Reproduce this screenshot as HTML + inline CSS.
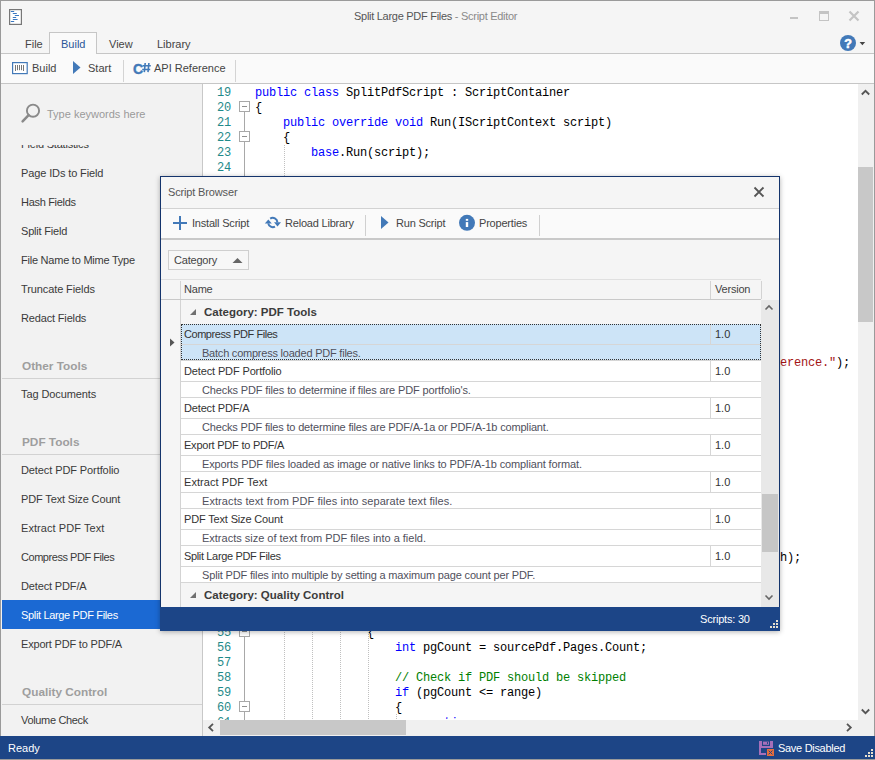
<!DOCTYPE html>
<html><head><meta charset="utf-8">
<style>
*{box-sizing:border-box;margin:0;padding:0}
html,body{width:875px;height:760px;overflow:hidden;background:#f5f5f5;font-family:"Liberation Sans",sans-serif;font-size:11px;color:#444}
.a{position:absolute}
.t{position:absolute;white-space:nowrap;line-height:1}
.cl{position:absolute;font-family:"Liberation Mono",monospace;font-size:12px;letter-spacing:-0.2px;line-height:15px;white-space:pre;color:#000}
.ln{position:absolute;left:201px;width:30px;text-align:right;font-family:"Liberation Mono",monospace;font-size:12px;letter-spacing:-0.2px;line-height:15px;color:#1f8a8a}
.k{color:#0000ff}.s{color:#a31515}.c{color:#008000}
.fold{position:absolute;left:239px;width:11px;height:11px;border:1px solid #a8a8a8;background:#fff}
.fold:after{content:"";position:absolute;left:2px;top:4px;width:5px;height:1px;background:#909090}
.guide{position:absolute;width:1px;background-image:linear-gradient(#c0c0c0 50%,transparent 50%);background-size:1px 2px}
</style></head><body>
<div class="a" style="left:0;top:0;width:875px;height:760px;border:1px solid #9a9a9a"></div>
<div class="a" style="left:1px;top:1px;width:873px;height:52px;background:#f5f5f5"></div>
<div class="t" style="left:354px;top:11px;font-size:11px;letter-spacing:-0.28px;color:#555">Split Large PDF Files <span style="color:#8a8a8a">- Script Editor</span></div>
<svg class="a" style="left:9px;top:9px" width="13" height="16" viewBox="0 0 13 16">
<rect x="0.6" y="0.6" width="11.8" height="14.8" fill="#fff" stroke="#777" stroke-width="1.2"/>
<path d="M2.2 2.5h2.6M4.2 4.5h3.2M6.2 6.5h3.4M4.2 8.5h2.6M4.2 10.5h4M2.2 12.5h2.6" stroke="#3a78c2" stroke-width="1" stroke-linecap="round"/>
</svg>
<div class="a" style="left:790px;top:17px;width:8px;height:2px;background:#c4c4c4"></div>
<div class="a" style="left:819px;top:11px;width:10px;height:10px;border:1px solid #c4c4c4;border-top-width:3px"></div>
<svg class="a" style="left:848px;top:10px" width="12" height="12" viewBox="0 0 12 12"><path d="M1.5 1.5L10.5 10.5M10.5 1.5L1.5 10.5" stroke="#c4c4c4" stroke-width="2.2"/></svg>
<svg class="a" style="left:839px;top:34px" width="30" height="18" viewBox="0 0 30 18">
<circle cx="9" cy="9" r="8" fill="#4279b8"/>
<text x="9" y="13.5" text-anchor="middle" font-family="Liberation Sans" font-weight="bold" font-size="12.5" fill="#fff" stroke="#fff" stroke-width="0.6">?</text>
<path d="M20.6 8h5.6l-2.8 3.2z" fill="#444"/>
</svg>
<div class="a" style="left:1px;top:53px;width:873px;height:1px;background:#c6c6c6"></div>
<div class="a" style="left:49px;top:32px;width:48px;height:22px;background:#fafafa;border:1px solid #c6c6c6;border-bottom:none"></div>
<div class="t" style="left:25px;top:39px;font-size:11px;color:#444">File</div>
<div class="t" style="left:61px;top:39px;font-size:11px;color:#2a5699">Build</div>
<div class="t" style="left:109px;top:39px;font-size:11px;color:#444">View</div>
<div class="t" style="left:157px;top:39px;font-size:11px;color:#444">Library</div>
<div class="a" style="left:1px;top:54px;width:873px;height:29px;background:#fafafa"></div>
<div class="a" style="left:1px;top:83px;width:873px;height:1px;background:#c6c6c6"></div>
<div class="t" style="left:32px;top:63px;font-size:11px;color:#444">Build</div>
<div class="t" style="left:88px;top:63px;font-size:11px;color:#444">Start</div>
<div class="t" style="left:154px;top:63px;font-size:11px;color:#444">API Reference</div>
<svg class="a" style="left:12px;top:62px" width="16" height="13" viewBox="0 0 16 13">
<rect x="0.6" y="0.6" width="14.6" height="11" fill="#fff" stroke="#4279b8" stroke-width="1.2"/>
<path d="M3.5 3v6M5.5 3v5.2M7.5 3v5.2M9.5 3v5.2M11.5 3v6" stroke="#777" stroke-width="1"/>
</svg>
<svg class="a" style="left:72px;top:60px" width="10" height="15" viewBox="0 0 10 15"><path d="M1 1L8.5 7.5L1 14z" fill="#4279b8"/></svg>
<svg class="a" style="left:132px;top:60px" width="20" height="16" viewBox="0 0 20 16">
<text x="1" y="14.2" font-family="Liberation Sans" font-weight="bold" font-size="14" fill="#4279b8" stroke="#4279b8" stroke-width="0.4">C</text>
<path d="M13.2 3L12.3 12.2M16.9 3L16 12.2M10.6 5.8H18.8M10.2 9.5H18.2" stroke="#4279b8" stroke-width="1.6"/>
</svg>
<div class="a" style="left:123px;top:60px;width:1px;height:22px;background:#d4d4d4"></div>
<div class="a" style="left:235px;top:60px;width:1px;height:22px;background:#d4d4d4"></div>
<div class="a" style="left:1px;top:84px;width:201px;height:652px;background:#f2f2f2"></div>
<div class="a" style="left:202px;top:84px;width:1px;height:652px;background:#c8c8c8"></div>
<div class="t" style="left:47px;top:109px;font-size:11px;color:#9a9a9a">Type keywords here</div>
<svg class="a" style="left:20px;top:102px" width="22" height="22" viewBox="0 0 22 22">
<circle cx="13" cy="8.7" r="6.1" fill="none" stroke="#8a8a8a" stroke-width="1.9"/>
<path d="M8.6 13.1L2.6 19.3" stroke="#8a8a8a" stroke-width="2.5" stroke-linecap="round"/>
</svg>
<div class="a" style="left:1px;top:145px;width:201px;height:591px;overflow:hidden">
<div class="a" style="left:1px;top:455px;width:201px;height:29px;background:#1b69d3"></div>
<div class="t" style="left:20px;top:-6px;font-size:11px;letter-spacing:-0.200px;color:#3a3a3a">Field Statistics</div>
<div class="t" style="left:20px;top:23px;font-size:11px;letter-spacing:-0.119px;color:#3a3a3a">Page IDs to Field</div>
<div class="t" style="left:20px;top:52px;font-size:11px;letter-spacing:-0.310px;color:#3a3a3a">Hash Fields</div>
<div class="t" style="left:20px;top:81px;font-size:11px;letter-spacing:-0.200px;color:#3a3a3a">Split Field</div>
<div class="t" style="left:20px;top:110px;font-size:11px;letter-spacing:-0.233px;color:#3a3a3a">File Name to Mime Type</div>
<div class="t" style="left:20px;top:139px;font-size:11px;letter-spacing:-0.107px;color:#3a3a3a">Truncate Fields</div>
<div class="t" style="left:20px;top:168px;font-size:11px;letter-spacing:-0.158px;color:#3a3a3a">Redact Fields</div>
<div class="t" style="left:21px;top:216px;font-size:11.8px;font-weight:bold;color:#9e9e9e">Other Tools</div>
<div class="a" style="left:1px;top:233px;width:201px;height:1px;background:#d2d2d2"></div>
<div class="t" style="left:20px;top:244px;font-size:11px;letter-spacing:-0.092px;color:#3a3a3a">Tag Documents</div>
<div class="t" style="left:21px;top:292px;font-size:11.8px;font-weight:bold;color:#9e9e9e">PDF Tools</div>
<div class="a" style="left:1px;top:309px;width:201px;height:1px;background:#d2d2d2"></div>
<div class="t" style="left:20px;top:320px;font-size:11px;letter-spacing:-0.095px;color:#3a3a3a">Detect PDF Portfolio</div>
<div class="t" style="left:20px;top:349px;font-size:11px;letter-spacing:-0.139px;color:#3a3a3a">PDF Text Size Count</div>
<div class="t" style="left:20px;top:378px;font-size:11px;letter-spacing:0.073px;color:#3a3a3a">Extract PDF Text</div>
<div class="t" style="left:20px;top:407px;font-size:11px;letter-spacing:-0.453px;color:#3a3a3a">Compress PDF Files</div>
<div class="t" style="left:20px;top:436px;font-size:11px;letter-spacing:-0.145px;color:#3a3a3a">Detect PDF/A</div>
<div class="t" style="left:20px;top:465px;font-size:11px;letter-spacing:-0.340px;color:#ffffff">Split Large PDF Files</div>
<div class="t" style="left:20px;top:494px;font-size:11px;letter-spacing:-0.189px;color:#3a3a3a">Export PDF to PDF/A</div>
<div class="t" style="left:21px;top:542px;font-size:11.8px;font-weight:bold;color:#9e9e9e">Quality Control</div>
<div class="a" style="left:1px;top:559px;width:201px;height:1px;background:#d2d2d2"></div>
<div class="t" style="left:20px;top:570px;font-size:11px;letter-spacing:-0.336px;color:#3a3a3a">Volume Check</div>
</div>
<div class="a" style="left:203px;top:84px;width:655px;height:636px;background:#fff"></div>
<div class="ln" style="top:86px">19</div>
<div class="ln" style="top:101px">20</div>
<div class="ln" style="top:116px">21</div>
<div class="ln" style="top:131px">22</div>
<div class="ln" style="top:146px">23</div>
<div class="ln" style="top:161px">24</div>
<div class="ln" style="top:626px">55</div>
<div class="ln" style="top:641px">56</div>
<div class="ln" style="top:656px">57</div>
<div class="ln" style="top:671px">58</div>
<div class="ln" style="top:686px">59</div>
<div class="ln" style="top:701px">60</div>
<div class="ln" style="top:716px">61</div>
<div class="cl" style="left:255px;top:86px"><span class="k">public</span> <span class="k">class</span> SplitPdfScript : ScriptContainer</div>
<div class="cl" style="left:255px;top:101px">{</div>
<div class="cl" style="left:283px;top:116px"><span class="k">public</span> <span class="k">override</span> <span class="k">void</span> Run(IScriptContext script)</div>
<div class="cl" style="left:283px;top:131px">{</div>
<div class="cl" style="left:311px;top:146px"><span class="k">base</span>.Run(script);</div>
<div class="cl" style="left:780px;top:356px"><span class="s">erence."</span>);</div>
<div class="cl" style="left:780px;top:551px">h);</div>
<div class="cl" style="left:367px;top:626px">{</div>
<div class="cl" style="left:395px;top:641px"><span class="k">int</span> pgCount = sourcePdf.Pages.Count;</div>
<div class="cl" style="left:395px;top:671px"><span class="c">// Check if PDF should be skipped</span></div>
<div class="cl" style="left:395px;top:686px"><span class="k">if</span> (pgCount &lt;= range)</div>
<div class="cl" style="left:395px;top:701px">{</div>
<div class="a" style="left:0;top:716px;width:858px;height:3px;overflow:hidden"><div class="cl" style="left:423px;top:0"><span class="k">continue</span>;</div></div>
<div class="a" style="left:244px;top:112px;width:1px;height:608px;background:#a8a8a8"></div>
<div class="fold" style="top:101px"></div>
<div class="fold" style="top:131px"></div>
<div class="fold" style="top:626px"></div>
<div class="fold" style="top:701px"></div>
<div class="guide" style="left:284px;top:145px;height:32px"></div>
<div class="guide" style="left:396px;top:714px;height:6px"></div>
<div class="guide" style="left:284px;top:630px;height:90px"></div>
<div class="guide" style="left:312px;top:630px;height:90px"></div>
<div class="guide" style="left:340px;top:630px;height:90px"></div>
<div class="guide" style="left:368px;top:630px;height:90px"></div>
<div class="a" style="left:203px;top:720px;width:671px;height:16px;background:#f0f0f0"></div>
<div class="a" style="left:220px;top:720px;width:186px;height:15px;background:#c8c8c8"></div>
<div class="a" style="left:858px;top:84px;width:16px;height:636px;background:#f0f0f0"></div>
<div class="a" style="left:858px;top:167px;width:15px;height:155px;background:#c8c8c8"></div>
<svg class="a" style="left:860px;top:88px" width="11" height="9" viewBox="0 0 11 9"><path d="M1.8 6.5L5.5 2.8L9.2 6.5" fill="none" stroke="#555" stroke-width="1.8"/></svg>
<svg class="a" style="left:860px;top:707px" width="11" height="9" viewBox="0 0 11 9"><path d="M1.8 2.5L5.5 6.2L9.2 2.5" fill="none" stroke="#555" stroke-width="1.8"/></svg>
<svg class="a" style="left:205px;top:722px" width="11" height="11" viewBox="0 0 11 11"><path d="M8 1.8L4.2 5.5L8 9.2" fill="none" stroke="#555" stroke-width="1.8"/></svg>
<svg class="a" style="left:844px;top:722px" width="11" height="11" viewBox="0 0 11 11"><path d="M3 1.8L6.8 5.5L3 9.2" fill="none" stroke="#555" stroke-width="1.8"/></svg>
<div class="a" style="left:0;top:736px;width:875px;height:23px;background:#1d4586"></div>
<div class="t" style="left:8px;top:743px;font-size:11px;color:#fff">Ready</div>
<div class="t" style="left:778px;top:743px;font-size:11px;letter-spacing:-0.3px;color:#fff">Save Disabled</div>
<svg class="a" style="left:756px;top:739px" width="20" height="19" viewBox="0 0 20 19">
<path d="M3 2H17V9H3z M6 2V7H14V2z" fill="#a56fb9" fill-rule="evenodd"/>
<rect x="7" y="2.6" width="6" height="3.2" fill="#a56fb9"/><rect x="11" y="3" width="0.9" height="2" fill="#1d4586"/>
<rect x="3" y="2" width="2" height="14" fill="#a56fb9"/>
<rect x="3" y="14" width="7" height="2" fill="#a56fb9"/>
<rect x="11" y="10" width="7" height="7" fill="#e56d3c"/>
<path d="M12.6 11.6L16.4 15.4M16.4 11.6L12.6 15.4" stroke="#1d4586" stroke-width="1"/>
</svg>
<div class="a" style="left:871px;top:749px;width:2px;height:2px;background:#e6dfcf"></div>
<div class="a" style="left:868px;top:752px;width:2px;height:2px;background:#e6dfcf"></div>
<div class="a" style="left:871px;top:752px;width:2px;height:2px;background:#e6dfcf"></div>
<div class="a" style="left:865px;top:755px;width:2px;height:2px;background:#e6dfcf"></div>
<div class="a" style="left:868px;top:755px;width:2px;height:2px;background:#e6dfcf"></div>
<div class="a" style="left:871px;top:755px;width:2px;height:2px;background:#e6dfcf"></div>
<div class="a" style="left:160px;top:176px;width:620px;height:455px;background:#f5f5f5;border:1px solid #14346c;box-shadow:0 1px 5px rgba(0,0,0,0.3)"></div>
<div class="t" style="left:168px;top:187px;font-size:11px;color:#555;letter-spacing:-0.15px">Script Browser</div>
<svg class="a" style="left:753px;top:186px" width="12" height="12" viewBox="0 0 12 12"><path d="M1.5 1.5L10.5 10.5M10.5 1.5L1.5 10.5" stroke="#555" stroke-width="1.8"/></svg>
<div class="a" style="left:161px;top:208px;width:618px;height:1px;background:#d2d2d2"></div>
<div class="a" style="left:161px;top:209px;width:618px;height:29px;background:#fafafa"></div>
<div class="a" style="left:161px;top:238px;width:618px;height:2px;background:#c9c9c9"></div>
<svg class="a" style="left:173px;top:216px" width="14" height="14" viewBox="0 0 14 14"><path d="M7 0v14M0 7h14" stroke="#4279b8" stroke-width="2"/></svg>
<div class="t" style="left:192px;top:218px;font-size:11px;color:#444;letter-spacing:-0.2px">Install Script</div>
<svg class="a" style="left:262px;top:213px" width="22" height="20" viewBox="0 0 22 20">
<path d="M8.2 5.6A4.7 4.7 0 0 1 15.4 9.4" fill="none" stroke="#4279b8" stroke-width="2"/>
<path d="M12 9.2H19L15.5 13.4z" fill="#4279b8"/>
<path d="M13 13.6A4.7 4.7 0 0 1 6.2 10.4" fill="none" stroke="#4279b8" stroke-width="2"/>
<path d="M2.8 10.6H9.8L6.3 6.6z" fill="#4279b8"/>
</svg>
<div class="t" style="left:285px;top:218px;font-size:11px;color:#444;letter-spacing:-0.2px">Reload Library</div>
<div class="a" style="left:365px;top:215px;width:1px;height:21px;background:#d0d0d0"></div>
<svg class="a" style="left:380px;top:215px" width="10" height="15" viewBox="0 0 10 15"><path d="M1 1L8.5 7.5L1 14z" fill="#4279b8"/></svg>
<div class="t" style="left:396px;top:218px;font-size:11px;color:#444;letter-spacing:-0.2px">Run Script</div>
<svg class="a" style="left:458px;top:214px" width="18" height="18" viewBox="0 0 18 18"><circle cx="9" cy="8.8" r="8" fill="#4279b8"/>
<rect x="7.8" y="8.1" width="2.4" height="4.9" fill="#fff"/><rect x="7.8" y="4.9" width="2.4" height="1.9" fill="#fff"/></svg>
<div class="t" style="left:479px;top:218px;font-size:11px;color:#444;letter-spacing:-0.2px">Properties</div>
<div class="a" style="left:539px;top:215px;width:1px;height:21px;background:#d0d0d0"></div>
<div class="a" style="left:168px;top:250px;width:81px;height:20px;border:1px solid #cfcfcf;background:#f7f7f7"></div>
<div class="t" style="left:174px;top:255px;font-size:11px;color:#444;letter-spacing:-0.2px">Category</div>
<svg class="a" style="left:232px;top:257px" width="11" height="7" viewBox="0 0 11 7"><path d="M0.5 6L5.5 1L10.5 6z" fill="#666"/></svg>
<div class="a" style="left:161px;top:279px;width:600px;height:1px;background:#e0e0e0"></div>
<div class="a" style="left:161px;top:280px;width:600px;height:19px;background:#f5f5f5"></div>
<div class="a" style="left:161px;top:299px;width:600px;height:1px;background:#c9c9c9"></div>
<div class="a" style="left:180px;top:281px;width:1px;height:18px;background:#d3d3d3"></div>
<div class="a" style="left:710px;top:281px;width:1px;height:18px;background:#d3d3d3"></div>
<div class="a" style="left:761px;top:281px;width:1px;height:18px;background:#d3d3d3"></div>
<div class="t" style="left:184px;top:284px;font-size:11px;color:#444;letter-spacing:-0.2px">Name</div>
<div class="t" style="left:715px;top:284px;font-size:11px;color:#444;letter-spacing:-0.2px">Version</div>
<div class="a" style="left:161px;top:300px;width:19px;height:307px;background:#f5f5f5"></div>
<div class="a" style="left:180px;top:300px;width:1px;height:307px;background:#d3d3d3"></div>
<div class="a" style="left:181px;top:300px;width:580px;height:24px;background:#f5f5f5"></div>
<svg class="a" style="left:189px;top:308px" width="8" height="8" viewBox="0 0 8 8"><path d="M7 1V7H1z" fill="#707070"/></svg>
<div class="t" style="left:204px;top:307px;font-size:11.5px;color:#3c3c3c;font-weight:bold">Category: PDF Tools</div>
<div class="a" style="left:181px;top:324px;width:580px;height:36px;background:#cde4f7"></div>
<div class="a" style="left:181px;top:344px;width:580px;height:1px;background:#d6d6d6"></div>
<div class="a" style="left:181px;top:360px;width:580px;height:1px;background:#d6d6d6"></div>
<div class="a" style="left:710px;top:324px;width:1px;height:20px;background:#d6d6d6"></div>
<div class="t" style="left:184px;top:329px;font-size:11px;color:#333;letter-spacing:-0.450px">Compress PDF Files</div>
<div class="t" style="left:715px;top:329px;font-size:11px;color:#333;">1.0</div>
<div class="t" style="left:202px;top:348px;font-size:11px;color:#50505c;letter-spacing:-0.221px">Batch compress loaded PDF files.</div>
<div class="a" style="left:181px;top:361px;width:580px;height:36px;background:#ffffff"></div>
<div class="a" style="left:181px;top:381px;width:580px;height:1px;background:#d6d6d6"></div>
<div class="a" style="left:181px;top:397px;width:580px;height:1px;background:#d6d6d6"></div>
<div class="a" style="left:710px;top:361px;width:1px;height:20px;background:#d6d6d6"></div>
<div class="t" style="left:184px;top:366px;font-size:11px;color:#333;letter-spacing:-0.134px">Detect PDF Portfolio</div>
<div class="t" style="left:715px;top:366px;font-size:11px;color:#333;">1.0</div>
<div class="t" style="left:202px;top:385px;font-size:11px;color:#50505c;letter-spacing:-0.133px">Checks PDF files to determine if files are PDF portfolio's.</div>
<div class="a" style="left:181px;top:398px;width:580px;height:36px;background:#ffffff"></div>
<div class="a" style="left:181px;top:418px;width:580px;height:1px;background:#d6d6d6"></div>
<div class="a" style="left:181px;top:434px;width:580px;height:1px;background:#d6d6d6"></div>
<div class="a" style="left:710px;top:398px;width:1px;height:20px;background:#d6d6d6"></div>
<div class="t" style="left:184px;top:403px;font-size:11px;color:#333;letter-spacing:-0.159px">Detect PDF/A</div>
<div class="t" style="left:715px;top:403px;font-size:11px;color:#333;">1.0</div>
<div class="t" style="left:202px;top:422px;font-size:11px;color:#50505c;letter-spacing:-0.173px">Checks PDF files to determine files are PDF/A-1a or PDF/A-1b compliant.</div>
<div class="a" style="left:181px;top:435px;width:580px;height:36px;background:#ffffff"></div>
<div class="a" style="left:181px;top:455px;width:580px;height:1px;background:#d6d6d6"></div>
<div class="a" style="left:181px;top:471px;width:580px;height:1px;background:#d6d6d6"></div>
<div class="a" style="left:710px;top:435px;width:1px;height:20px;background:#d6d6d6"></div>
<div class="t" style="left:184px;top:440px;font-size:11px;color:#333;letter-spacing:-0.228px">Export PDF to PDF/A</div>
<div class="t" style="left:715px;top:440px;font-size:11px;color:#333;">1.0</div>
<div class="t" style="left:202px;top:459px;font-size:11px;color:#50505c;letter-spacing:-0.129px">Exports PDF files loaded as image or native links to PDF/A-1b compliant format.</div>
<div class="a" style="left:181px;top:472px;width:580px;height:36px;background:#ffffff"></div>
<div class="a" style="left:181px;top:492px;width:580px;height:1px;background:#d6d6d6"></div>
<div class="a" style="left:181px;top:508px;width:580px;height:1px;background:#d6d6d6"></div>
<div class="a" style="left:710px;top:472px;width:1px;height:20px;background:#d6d6d6"></div>
<div class="t" style="left:184px;top:477px;font-size:11px;color:#333;letter-spacing:0.070px">Extract PDF Text</div>
<div class="t" style="left:715px;top:477px;font-size:11px;color:#333;">1.0</div>
<div class="t" style="left:202px;top:496px;font-size:11px;color:#50505c;letter-spacing:0.076px">Extracts text from PDF files into separate text files.</div>
<div class="a" style="left:181px;top:509px;width:580px;height:36px;background:#ffffff"></div>
<div class="a" style="left:181px;top:529px;width:580px;height:1px;background:#d6d6d6"></div>
<div class="a" style="left:181px;top:545px;width:580px;height:1px;background:#d6d6d6"></div>
<div class="a" style="left:710px;top:509px;width:1px;height:20px;background:#d6d6d6"></div>
<div class="t" style="left:184px;top:514px;font-size:11px;color:#333;letter-spacing:-0.161px">PDF Text Size Count</div>
<div class="t" style="left:715px;top:514px;font-size:11px;color:#333;">1.0</div>
<div class="t" style="left:202px;top:533px;font-size:11px;color:#50505c;letter-spacing:-0.007px">Extracts size of text from PDF files into a field.</div>
<div class="a" style="left:181px;top:546px;width:580px;height:36px;background:#ffffff"></div>
<div class="a" style="left:181px;top:566px;width:580px;height:1px;background:#d6d6d6"></div>
<div class="a" style="left:181px;top:582px;width:580px;height:1px;background:#d6d6d6"></div>
<div class="a" style="left:710px;top:546px;width:1px;height:20px;background:#d6d6d6"></div>
<div class="t" style="left:184px;top:551px;font-size:11px;color:#333;letter-spacing:-0.350px">Split Large PDF Files</div>
<div class="t" style="left:715px;top:551px;font-size:11px;color:#333;">1.0</div>
<div class="t" style="left:202px;top:570px;font-size:11px;color:#50505c;letter-spacing:-0.159px">Split PDF files into multiple by setting a maximum page count per PDF.</div>
<div class="a" style="left:181px;top:324px;width:580px;height:36px;border:1px dotted #333"></div>
<div class="a" style="left:161px;top:583px;width:600px;height:24px;overflow:hidden">
<div class="a" style="left:20px;top:0;width:580px;height:24px;background:#f5f5f5"></div>
<svg class="a" style="left:28px;top:8px" width="8" height="8" viewBox="0 0 8 8"><path d="M7 1V7H1z" fill="#707070"/></svg>
<div class="t" style="left:43px;top:7px;font-size:11.5px;color:#3c3c3c;font-weight:bold">Category: Quality Control</div>
</div>
<svg class="a" style="left:169px;top:338px" width="6" height="9" viewBox="0 0 6 9"><path d="M1 0.5L5.5 4.5L1 8.5z" fill="#555"/></svg>
<div class="a" style="left:761px;top:300px;width:18px;height:307px;background:#e8e8e8"></div>
<div class="a" style="left:762px;top:494px;width:16px;height:58px;background:#c6c6c6"></div>
<svg class="a" style="left:764px;top:303px" width="10" height="9" viewBox="0 0 10 9"><path d="M1.5 6.5L5 3L8.5 6.5" fill="none" stroke="#666" stroke-width="1.6"/></svg>
<svg class="a" style="left:764px;top:593px" width="10" height="9" viewBox="0 0 10 9"><path d="M1.5 2.5L5 6L8.5 2.5" fill="none" stroke="#666" stroke-width="1.6"/></svg>
<div class="a" style="left:160px;top:607px;width:620px;height:24px;background:#1c4587"></div>
<div class="t" style="left:700px;top:614px;font-size:11px;color:#fff;letter-spacing:-0.2px">Scripts: 30</div>
<div class="a" style="left:776px;top:620px;width:2px;height:2px;background:#e6dfcf"></div>
<div class="a" style="left:773px;top:623px;width:2px;height:2px;background:#e6dfcf"></div>
<div class="a" style="left:776px;top:623px;width:2px;height:2px;background:#e6dfcf"></div>
<div class="a" style="left:770px;top:626px;width:2px;height:2px;background:#e6dfcf"></div>
<div class="a" style="left:773px;top:626px;width:2px;height:2px;background:#e6dfcf"></div>
<div class="a" style="left:776px;top:626px;width:2px;height:2px;background:#e6dfcf"></div>
</body></html>
